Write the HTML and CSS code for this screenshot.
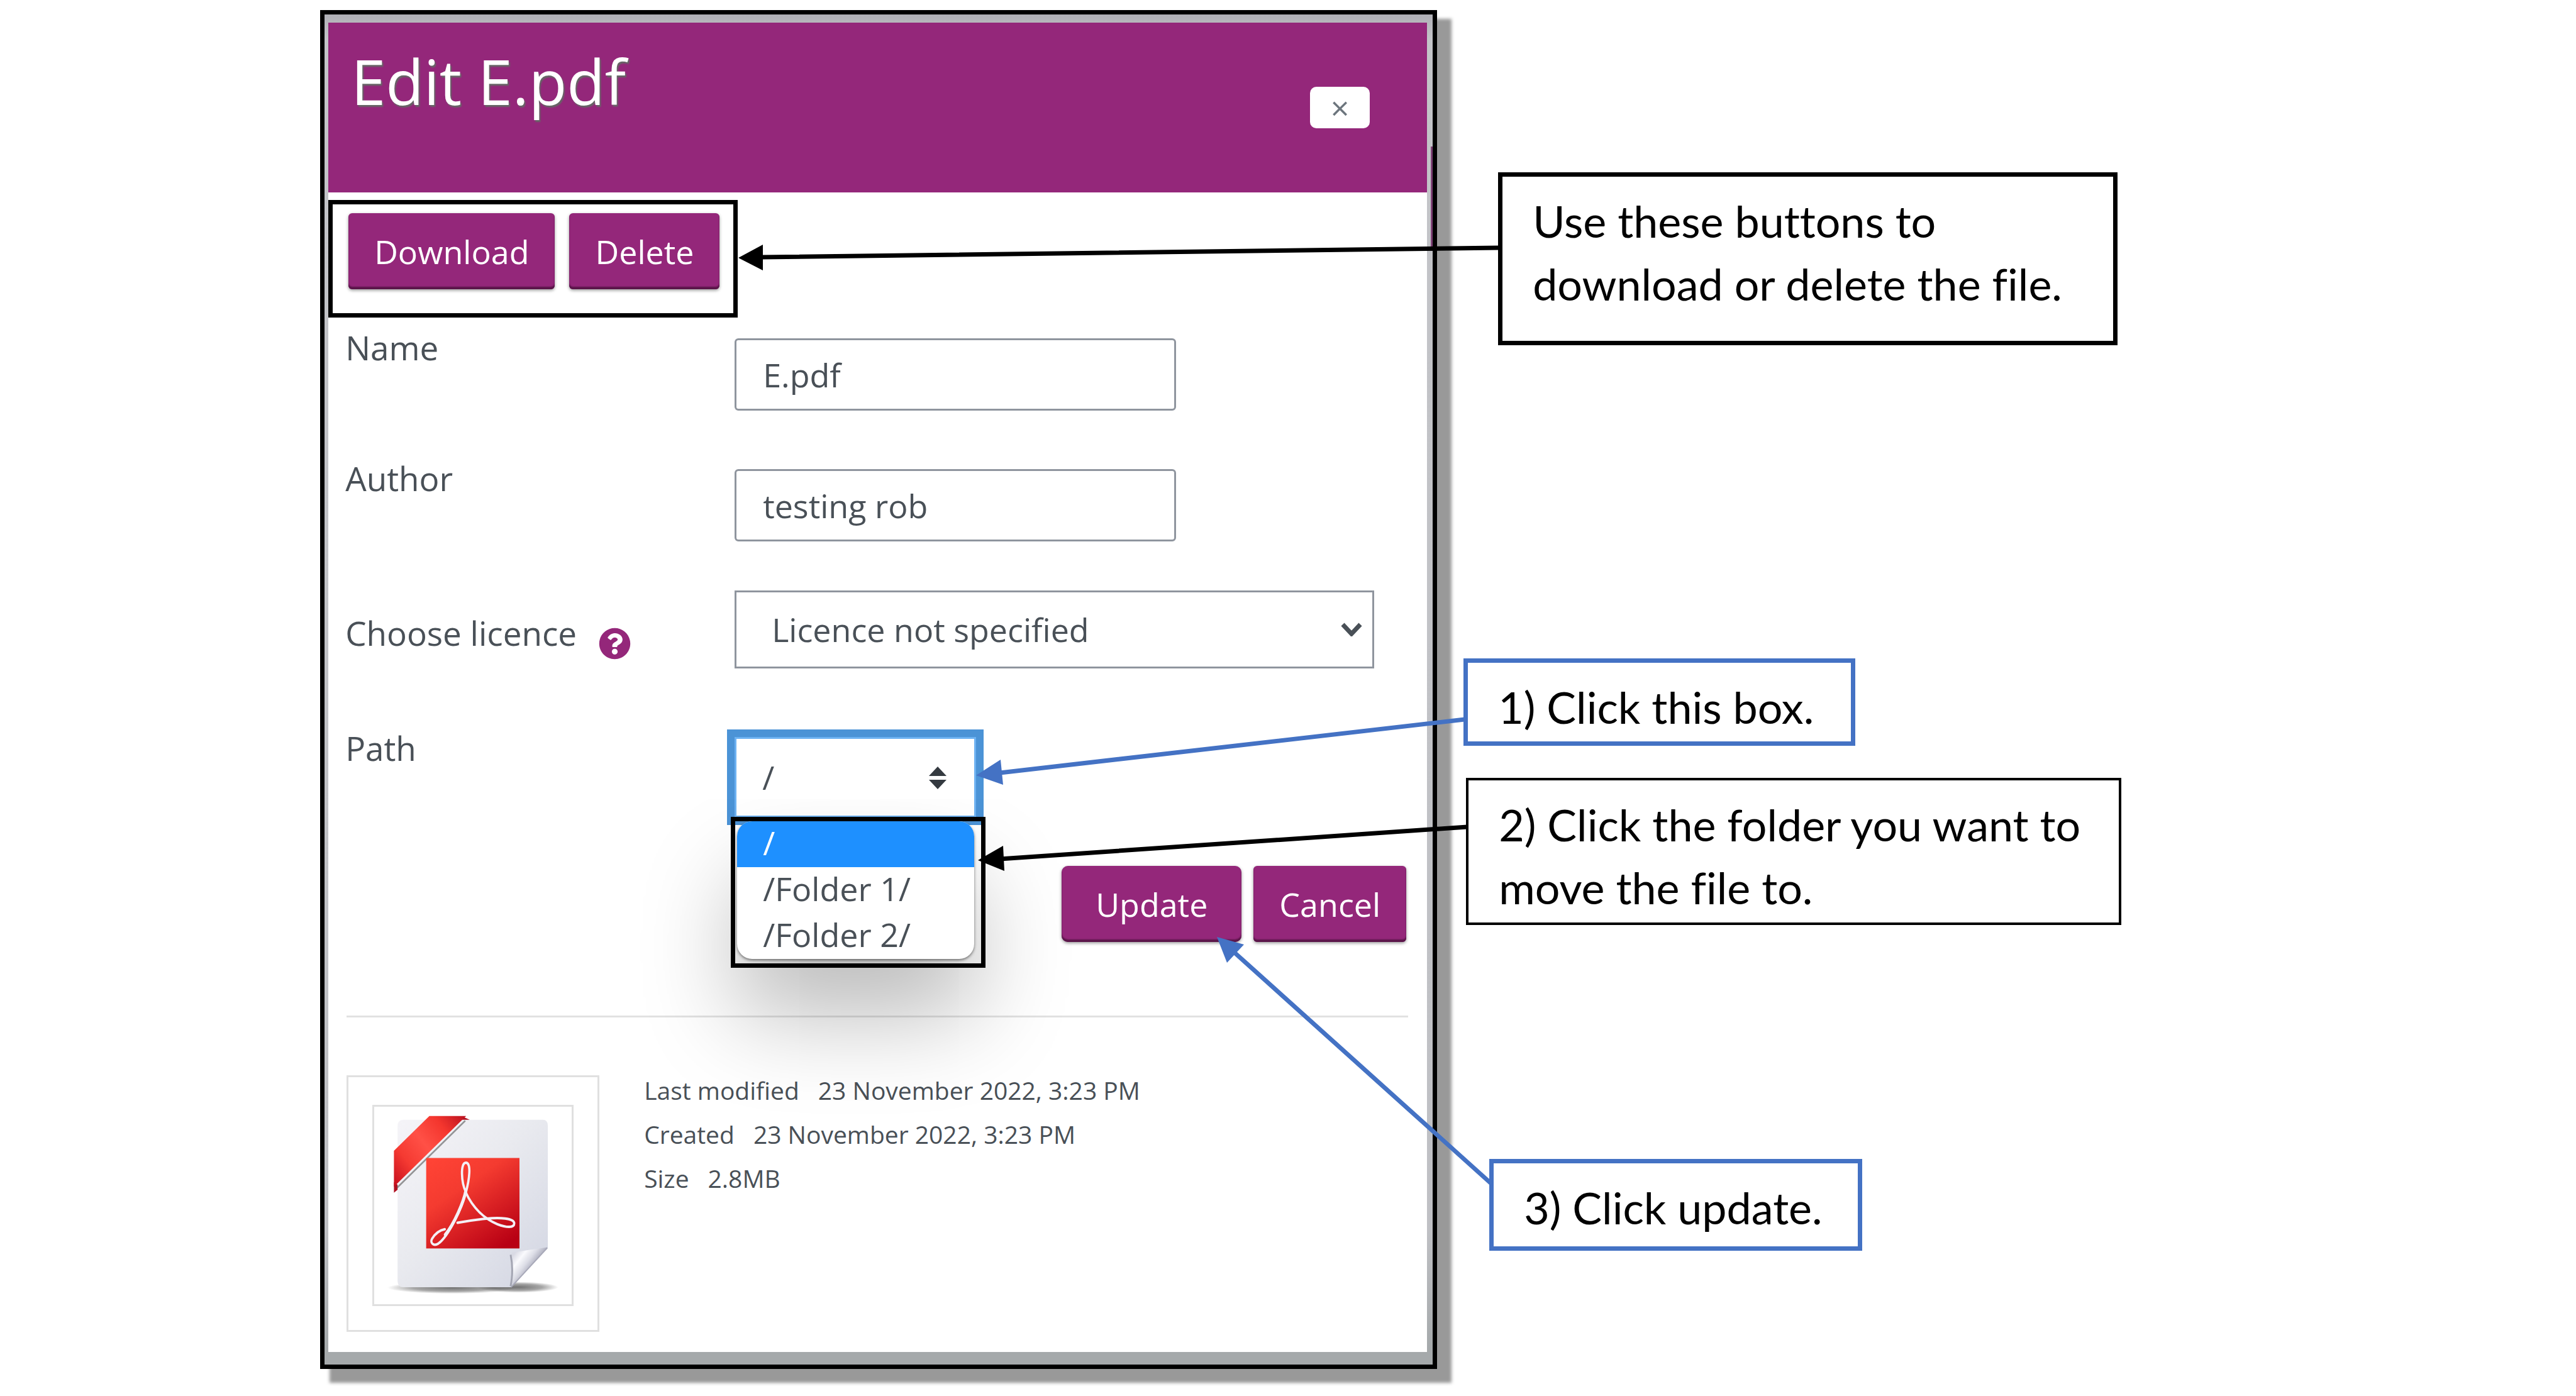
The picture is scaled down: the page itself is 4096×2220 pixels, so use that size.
FILE: index.html
```html
<!DOCTYPE html>
<html lang="en">
<head>
<meta charset="utf-8">
<title>Edit E.pdf</title>
<link rel="stylesheet" href="styles.css">
</head>
<body>
<main class="guide">
  <section class="dialog" aria-labelledby="dialog-title">
    <header class="dialog-header">
      <h1 class="dialog-title" id="dialog-title">Edit E.pdf</h1>
      <button class="close" type="button" aria-label="Close">×</button>
    </header>
    <form class="dialog-body">
      <div class="toolbar">
        <button class="btn" type="button">Download</button>
        <button class="btn" type="button">Delete</button>
      </div>

      <div class="fields">
        <div class="row">
          <label class="label" for="name">Name</label>
          <input class="input" id="name" type="text" value="E.pdf">
        </div>
        <div class="row">
          <label class="label" for="author">Author</label>
          <input class="input" id="author" type="text" value="testing rob">
        </div>
        <div class="row row-licence">
          <div class="label-group">
            <label class="label" for="licence">Choose licence</label>
            <svg class="help" viewBox="0 0 512 512" role="img" aria-label="Help">
              <path fill="#94277a" d="M504 256c0 137-111 248-248 248S8 393 8 256 119 8 256 8s248 111 248 248zM262.700 90c-54.500 0-89.300 23-116.500 63.800-3.500 5.300-2.400 12.400 2.700 16.300l34.700 26.300c5.200 3.900 12.600 3 16.700-2.100 17.900-22.700 30.100-35.800 57.300-35.800 20.400 0 45.700 13.100 45.700 33 0 15-12.400 22.700-32.500 34C247.100 238.500 216 255 216 296v4c0 6.600 5.400 12 12 12h56c6.600 0 12-5.400 12-12v-1.300c0-28.800 84.200-30 84.200-108 0-58.700-60.900-100.700-117.500-100.700zM256 338c-25.400 0-46 20.600-46 46s20.600 46 46 46 46-20.600 46-46-20.600-46-46-46z"/>
            </svg>
          </div>
          <div class="picker">
            <select class="select" id="licence"><option>Licence not specified</option></select>
            <svg class="chevron" viewBox="0 0 34 22" aria-hidden="true"><path d="M3 3l14 15L31 3" fill="none" stroke="#495057" stroke-width="7"/></svg>
          </div>
        </div>
        <div class="row row-path">
          <label class="label" for="path">Path</label>
          <div class="picker picker-path">
            <select class="select select-open" id="path"><option>/</option></select>
            <svg class="sorter" viewBox="0 0 28 36" aria-hidden="true"><path d="M14 0l14 15H0zM14 36L0 21h28z" fill="#343a40"/></svg>
            <div class="menu-frame">
              <ul class="menu" role="listbox" aria-label="Path">
                <li class="option option-active" role="option" aria-selected="true">/</li>
                <li class="option" role="option" aria-selected="false">/Folder 1/</li>
                <li class="option" role="option" aria-selected="false">/Folder 2/</li>
              </ul>
            </div>
          </div>
        </div>
      </div>

      <div class="actions">
        <button class="btn btn-primary" type="button">Update</button>
        <button class="btn" type="button">Cancel</button>
      </div>

      <hr class="rule">

      <div class="file">
        <div class="thumb">
          <svg class="thumb-image" viewBox="217 428 870 790" preserveAspectRatio="none" role="img" aria-label="PDF document">
            <defs>
              <linearGradient id="paper" x1="0" y1="0" x2="1" y2="1">
                <stop offset="0" stop-color="#f5f4f8"/><stop offset=".45" stop-color="#e9eaef"/><stop offset="1" stop-color="#d2d5e2"/>
              </linearGradient>
              <linearGradient id="square" x1="0.100" y1="0" x2="0.800" y2="1">
                <stop offset="0" stop-color="#ff4335"/><stop offset=".35" stop-color="#f43b30"/><stop offset="1" stop-color="#b80014"/>
              </linearGradient>
              <linearGradient id="ribbon" gradientUnits="userSpaceOnUse" x1="306" y1="740" x2="620" y2="466">
                <stop offset="0" stop-color="#c8101e"/><stop offset=".25" stop-color="#f53a32"/><stop offset=".5" stop-color="#ff5046"/><stop offset=".75" stop-color="#f4362e"/><stop offset="1" stop-color="#bb1220"/>
              </linearGradient>
              <linearGradient id="curl" gradientUnits="userSpaceOnUse" x1="835" y1="1015" x2="905" y2="1075">
                <stop offset="0" stop-color="#d9dae4"/><stop offset=".35" stop-color="#fafafd"/><stop offset=".7" stop-color="#dcdde6"/><stop offset="1" stop-color="#b2b3c2"/>
              </linearGradient>
              <radialGradient id="ground">
                <stop offset="0" stop-color="#000" stop-opacity=".55"/><stop offset=".6" stop-color="#000" stop-opacity=".35"/><stop offset="1" stop-color="#000" stop-opacity="0"/>
              </radialGradient>
            </defs>
            <ellipse cx="560" cy="1152" rx="285" ry="24" fill="url(#ground)"/>
            <ellipse cx="850" cy="1150" rx="178" ry="22" fill="url(#ground)"/>
            <path d="M345 480H960Q982 480 982 504V990L820 1150H345Q320 1150 320 1124V506Q320 480 345 480Z" fill="url(#paper)"/>
            <path d="M820 1150Q836 1080 822 1012Q900 1000 980 990Z" fill="url(#curl)"/>
            <path d="M818 1020Q832 1080 818 1146" fill="none" stroke="#a3a5b2" stroke-width="8"/>
            <path d="M980 992L820 1150" stroke="#a7a8b8" stroke-width="5"/>
            <path d="M602 466L638 480H600ZM304 730V772L320 760V740Z" fill="#b01020"/>
            <path d="M318 752L618 484" stroke="#555" stroke-opacity=".6" stroke-width="7"/>
            <path d="M460 465H622L304 748V604Z" fill="url(#ribbon)"/>
            <rect x="446" y="633" width="411" height="362" fill="url(#square)"/>
            <g fill="none" stroke="#f4f0f6" stroke-linecap="round" stroke-linejoin="round">
              <path stroke-width="10" d="M621 770C600 730 596 652 621 652C646 652 636 720 621 770C606 830 545 945 500 975C478 988 462 972 472 956C484 938 505 922 528 918"/>
              <path stroke-width="13" d="M621 762C611 810 570 895 530 940"/>
              <path stroke-width="10" d="M621 772C650 830 700 876 760 898C800 912 834 914 834 894C832 874 770 870 710 876C660 880 620 886 584 892"/>
            </g>
          </svg>
        </div>
        <dl class="details">
          <div class="detail"><dt>Last modified</dt><dd>23 November 2022, 3:23 PM</dd></div>
          <div class="detail"><dt>Created</dt><dd>23 November 2022, 3:23 PM</dd></div>
          <div class="detail"><dt>Size</dt><dd>2.8MB</dd></div>
        </dl>
      </div>
    </form>
  </section>

  <aside class="callouts">
    <p class="callout callout-buttons">Use these buttons to<br>download or delete the file.</p>
    <p class="callout callout-box">1) Click this box.</p>
    <p class="callout callout-folder">2) Click the folder you want to<br>move the file to.</p>
    <p class="callout callout-update">3) Click update.</p>
  </aside>

  <svg class="arrows" viewBox="0 0 4096 2220" aria-hidden="true">
    <g stroke="#000" fill="#000">
      <path stroke-width="7" d="M1210 409L2384 394M1590 1366L2333 1315"/>
      <path stroke="none" d="M1174 410L1213 389V430ZM1555 1368L1595 1345L1597 1385Z"/>
    </g>
    <g stroke="#4472c4" fill="#4472c4">
      <path stroke-width="7" d="M1590 1229L2329 1144M1962 1514L2372 1883"/>
      <path stroke="none" d="M1552 1233L1591 1208L1595 1248ZM1935 1490L1978 1502L1951 1531Z"/>
    </g>
  </svg>
</main>
</body>
</html>
```
FILE: styles.css
```css
* {
  box-sizing: border-box;
}

body {
  margin: 0;
  background: #fff;
  color: #495057;
  font-family: "Open Sans", "Noto Sans", sans-serif;
}

.guide {
  position: relative;
  display: grid;
  grid-template-columns: 43.36vw 1fr;
  column-gap: 42px;
  align-items: start;
  padding: 16px 0 42px 12.43%;
}

/* Dialog */

.dialog {
  padding: 13px 9px 20px 6px;
  border: 7px solid #000;
  background:
    linear-gradient(#7f4377, #7f4377) right 210px / 3px 166px no-repeat,
    linear-gradient(#b0b0b6, #c3c4c8 40px, #bfc0c4 90%, #a5a9ab 99%);
  box-shadow: 19px 18px 5px 4px #999;
}

.dialog-header {
  display: flex;
  justify-content: space-between;
  align-items: flex-start;
  height: 270px;
  padding: 43px 91px 0 36px;
  background: #94277a;
}

.dialog-title {
  margin: 0;
  color: #fff;
  font-size: 99px;
  font-weight: 400;
  line-height: 100px;
  text-shadow: 2px 3px 2px #666;
}

.close {
  width: 95px;
  height: 66px;
  margin-top: 59px;
  padding: 0;
  border: 0;
  border-radius: 10px;
  background: #fff;
  color: #6c757d;
  font: 52px/60px "Open Sans", sans-serif;
}

.dialog-body {
  padding: 12px 0 32px;
  background: #fff;
}

.toolbar {
  display: flex;
  gap: 23px;
  width: fit-content;
  padding: 14px 22px 38px 25px;
  border: 7px solid #000;
}

.btn {
  height: 121px;
  padding: 0 41px;
  border: 0;
  border-radius: 6px;
  background: #94277a;
  box-shadow: inset 0 -4px 2px #5a1549, 0 2px 5px rgba(0, 0, 0, .4);
  color: #fff;
  font: 52px/72px "Open Sans", sans-serif;
}

.btn-primary {
  padding: 0 54px;
  border-radius: 10px;
}

.fields {
  padding: 12px 84px 0 27px;
}

.row {
  display: grid;
  grid-template-columns: 619px 1fr;
  align-items: start;
  margin-bottom: 72px;
}

.label {
  font-size: 53px;
  line-height: 72px;
}

.label-group {
  display: flex;
  gap: 35px;
  margin-top: 32px;
}

.help {
  width: 51px;
  height: 51px;
  margin-top: 27px;
}

.input {
  width: 702px;
  height: 115px;
  margin-top: 21px;
  padding: 0 42px;
  border: 3px solid #8f959e;
  border-radius: 6px;
  background: #fff;
  color: #495057;
  font: 52px/72px "Open Sans", sans-serif;
}

.row-licence {
  margin: 78px 0 91px;
}

.picker {
  position: relative;
}

.select {
  display: block;
  width: 100%;
  height: 124px;
  padding: 0 56px;
  border: 3px solid #8f959e;
  border-radius: 0;
  appearance: none;
  background: #fff;
  color: #495057;
  font: 52px/72px "Open Sans", sans-serif;
}

.chevron {
  position: absolute;
  top: 51px;
  right: 19px;
  width: 34px;
  height: 22px;
}

.row-path {
  margin-bottom: 0;
}

.picker-path {
  width: 384px;
  margin-top: 18px;
}

.select-open {
  height: 128px;
  padding: 0 41px;
  border-color: #6db2f2;
  box-shadow: 0 0 0 12px #4b93d6;
}

.sorter {
  position: absolute;
  top: 47px;
  right: 47px;
  width: 28px;
  height: 36px;
}

.menu-frame {
  position: absolute;
  top: 127px;
  left: -6px;
  width: 405px;
  height: 240px;
  padding: 0 11px 0 3px;
  border: 7px solid #000;
}

.menu {
  margin: 0;
  padding: 0;
  border-radius: 24px;
  background: #fff;
  box-shadow: 0 2px 4px rgba(0, 0, 0, .5), 0 90px 150px rgba(0, 0, 0, .27);
  list-style: none;
}

.option {
  padding: 0 41px 5px;
  font-size: 52px;
  line-height: 68px;
}

.option-active {
  border-radius: 24px 24px 0 0;
  background: #1e90ff;
  color: #fff;
}

.actions {
  position: relative;
  display: flex;
  justify-content: flex-end;
  gap: 19px;
  margin-top: 77px;
  padding-right: 33px;
}

.rule {
  height: 3px;
  margin: 117px 30px 81px 29px;
  border: 0;
  background: #e2e2e2;
}

.file {
  display: flex;
  align-items: flex-start;
  gap: 71px;
  padding-left: 29px;
}

.thumb {
  margin-top: 11px;
  padding: 44px 38px 38px;
  border: 3px solid #e0e0e0;
}

.thumb-image {
  display: block;
  width: 320px;
  height: 320px;
  border: 3px solid #e0e0e0;
}

.details {
  margin: 0;
  font-size: 39px;
  line-height: 70px;
}

.detail {
  display: flex;
  gap: 30px;
}

.detail dd {
  margin: 0;
}

/* Callouts */

.callouts {
  display: flex;
  flex-direction: column;
  align-items: flex-start;
  padding-top: 258px;
}

.callout {
  margin: 0;
  padding: 20px 48px 12px;
  border: 7px solid #000;
  background: #fff;
  color: #000;
  font: 70px/100px Lato, "Open Sans", sans-serif;
  font-variant-ligatures: none;
  white-space: nowrap;
}

.callout-buttons {
  width: 985px;
  margin-left: 55px;
  padding-bottom: 41px;
}

.callout-box {
  width: 623px;
  margin-top: 498px;
  padding-bottom: 5px;
  border-color: #4472c4;
}

.callout-folder {
  width: 1042px;
  margin: 51px 0 0 4px;
  padding-bottom: 6px;
  border-width: 4px;
}

.callout-update {
  width: 593px;
  margin: 372px 0 0 41px;
  border-color: #4472c4;
}

.arrows {
  position: absolute;
  top: 0;
  left: 0;
  width: 100%;
}
```
